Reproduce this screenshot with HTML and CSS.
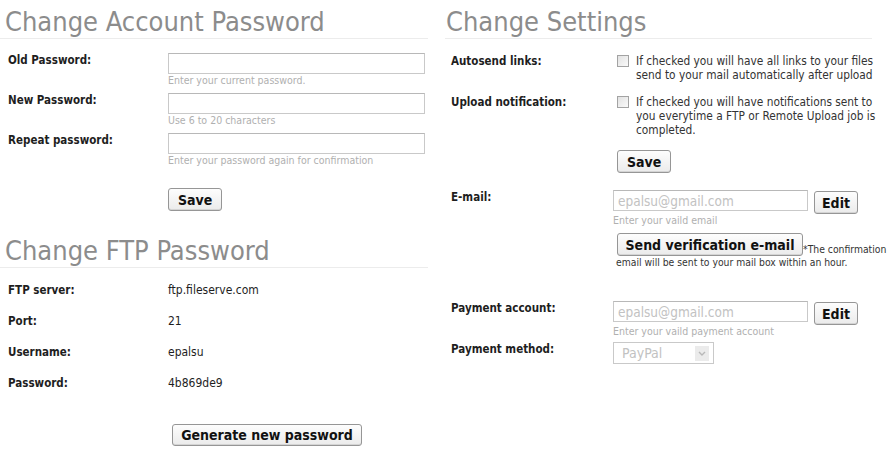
FILE: index.html
```html
<!DOCTYPE html>
<html lang="en">
<head>
    <meta charset="UTF-8">
    <meta name="viewport" content="width=device-width, initial-scale=1.0">
    <title>Account Settings</title>
    <link rel="stylesheet" href="styles.css">
</head>
<body>
    <main class="page">
        <div class="col col-left">
            <section class="panel">
                <h2 class="panel-title">Change Account Password</h2>
                <form class="form account">
                    <div class="row pass-row">
                        <label class="label" for="old-pass">Old Password:</label>
                        <div class="field">
                            <input type="password" id="old-pass" class="text-input">
                            <span class="hint">Enter your current password.</span>
                        </div>
                    </div>
                    <div class="row pass-row">
                        <label class="label" for="new-pass">New Password:</label>
                        <div class="field">
                            <input type="password" id="new-pass" class="text-input">
                            <span class="hint">Use 6 to 20 characters</span>
                        </div>
                    </div>
                    <div class="row pass-row">
                        <label class="label" for="repeat-pass">Repeat password:</label>
                        <div class="field">
                            <input type="password" id="repeat-pass" class="text-input">
                            <span class="hint">Enter your password again for confirmation</span>
                        </div>
                    </div>
                    <div class="actions">
                        <button type="button" class="btn">Save</button>
                    </div>
                </form>
            </section>

            <section class="panel ftp">
                <h2 class="panel-title">Change FTP Password</h2>
                <dl class="ftp-info">
                    <dt>FTP server:</dt>
                    <dd>ftp.fileserve.com</dd>
                    <dt>Port:</dt>
                    <dd>21</dd>
                    <dt>Username:</dt>
                    <dd>epalsu</dd>
                    <dt>Password:</dt>
                    <dd>4b869de9</dd>
                </dl>
                <div class="ftp-actions">
                    <button type="button" class="btn btn-generate">Generate new password</button>
                </div>
            </section>
        </div>

        <div class="col col-right">
            <section class="panel">
                <h2 class="panel-title">Change Settings</h2>
                <form class="form settings">
                    <div class="row check-row">
                        <span class="label">Autosend links:</span>
                        <label class="field check">
                            <input type="checkbox" class="checkbox">
                            <span class="check-text">If checked you will have all links to your files send to your mail automatically after upload</span>
                        </label>
                    </div>
                    <div class="row check-row">
                        <span class="label">Upload notification:</span>
                        <label class="field check">
                            <input type="checkbox" class="checkbox">
                            <span class="check-text">If checked you will have notifications sent to you everytime a FTP or Remote Upload job is completed.</span>
                        </label>
                    </div>
                    <div class="actions">
                        <button type="button" class="btn">Save</button>
                    </div>

                    <div class="row email-row">
                        <label class="label" for="email">E-mail:</label>
                        <div class="field">
                            <div class="inline-edit">
                                <input type="text" id="email" class="text-input short" value="epalsu@gmail.com" disabled>
                                <button type="button" class="btn btn-edit">Edit</button>
                            </div>
                            <span class="hint">Enter your vaild email</span>
                            <p class="verify"><button type="button" class="btn btn-verify">Send verification e-mail</button><span class="note">*The confirmation</span><br><span class="note">email will be sent to your mail box within an hour.</span></p>
                        </div>
                    </div>

                    <div class="row payment-row">
                        <label class="label" for="pay-account">Payment account:</label>
                        <div class="field">
                            <div class="inline-edit">
                                <input type="text" id="pay-account" class="text-input short" value="epalsu@gmail.com" disabled>
                                <button type="button" class="btn btn-edit">Edit</button>
                            </div>
                            <span class="hint">Enter your vaild payment account</span>
                        </div>
                    </div>
                    <div class="row method-row">
                        <span class="label">Payment method:</span>
                        <div class="field">
                            <div class="select disabled">
                                <span class="select-value">PayPal</span>
                                <span class="select-arrow">
                                    <svg width="8" height="5" viewBox="0 0 8 5"><path d="M1 1l3 3 3-3" fill="none" stroke="#b8b8b8" stroke-width="1.4"/></svg>
                                </span>
                            </div>
                        </div>
                    </div>
                </form>
            </section>
        </div>
    </main>
</body>
</html>
```

FILE: styles.css
```css
:root {
  --clr-title: #8c8c8c;
  --clr-text: #1e1e1e;
  --clr-hint: #b0b0b0;
  --clr-line: #ececec;
  --clr-border: #c9c9c9;
  --ff-main: "DejaVu Sans Condensed", "DejaVu Sans", Verdana, sans-serif;
}

*,
::after,
::before {
  margin: 0;
  padding: 0;
  box-sizing: border-box;
}

body {
  background: #fff;
  color: var(--clr-text);
  font-family: var(--ff-main);
  font-stretch: condensed;
  font-size: 11px;
}

.page {
  display: flex;
  gap: 17px;
  width: 891px;
}

.col-left {
  width: 428px;
}

.col-right {
  width: 446px;
}

.panel-title {
  font-weight: normal;
  font-size: 27px;
  line-height: 33px;
  height: 39px;
  padding: 5px 0 0 5px;
  color: var(--clr-title);
  border-bottom: 1px solid var(--clr-line);
}

.col-right .panel-title {
  margin-right: 19px;
  padding-left: 1px;
}

/* label / field rows */
.row {
  display: flex;
  align-items: flex-start;
}

.label {
  flex: 0 0 168px;
  padding-left: 8px;
  font-weight: bold;
  font-size: 11.5px;
}

.field {
  flex: 1;
}

.hint {
  display: block;
  font-size: 10.5px;
  line-height: 13px;
  color: var(--clr-hint);
}

.text-input {
  display: block;
  width: 257px;
  height: 21px;
  border: 1px solid var(--clr-border);
  border-top-color: #b8b8b8;
  background: #fff;
  font-family: var(--ff-main);
  font-size: 13.5px;
  padding: 0 4px;
}

.text-input:disabled {
  color: #c2c2c2;
  background: #fff;
}

.text-input.short {
  width: 195px;
}

.btn {
  height: 23px;
  padding: 0 9px;
  white-space: nowrap;
  font-family: var(--ff-main);
  font-weight: bold;
  font-size: 14px;
  color: #111;
  background: linear-gradient(#fdfdfd, #ebebeb);
  border: 1px solid #969696;
  border-radius: 3px;
  box-shadow: inset 0 -1px 0 #d4d4d4;
}

/* account password */
.account .pass-row:first-child {
  margin-top: 14px;
}

.account .pass-row + .pass-row {
  margin-top: 6px;
}

.account .actions {
  margin: 21px 0 0 168px;
}

/* ftp details */
.ftp {
  margin-top: 18px;
}

.ftp-info {
  display: grid;
  grid-template-columns: 168px 1fr;
  margin-top: 7px;
  line-height: 31px;
}

.ftp-info dt {
  padding-left: 8px;
  font-weight: bold;
  font-size: 11.5px;
}

.ftp-info dd {
  font-size: 12px;
}

.ftp-actions {
  margin: 25px 0 0 172px;
}

.btn-generate {
  width: 190px;
  height: 22px;
  padding: 0;
}

/* settings */
.settings .label {
  padding-left: 6px;
}

.check-row:first-child {
  margin-top: 15px;
}

.check-row + .check-row {
  margin-top: 13px;
}

.check {
  display: flex;
  gap: 7px;
  padding-left: 4px;
  line-height: 14px;
  font-size: 11.8px;
  color: #333;
}

.check-text {
  width: 252px;
}

.checkbox {
  appearance: none;
  flex: 0 0 12px;
  width: 12px;
  height: 12px;
  margin-top: 1px;
  border: 1px solid #a3a3a3;
  background: linear-gradient(135deg, #e2e2e2, #fafafa);
}

.settings .actions {
  margin: 13px 0 0 172px;
}

.email-row {
  margin-top: 17px;
}

.inline-edit {
  display: flex;
  align-items: flex-start;
  gap: 6px;
}

.btn-edit {
  margin-top: 1px;
  width: 44px;
  padding: 0;
}

.verify {
  margin: 6px -20px 0 0;
  padding-left: 3px;
  font-size: 10.3px;
  line-height: 13px;
}

.btn-verify {
  width: 186px;
  padding: 0;
  margin-left: 1px;
  vertical-align: bottom;
}

.note {
  color: #333;
}

.payment-row {
  margin-top: 32px;
}

.method-row {
  margin-top: 4px;
}

.select {
  display: flex;
  align-items: center;
  justify-content: space-between;
  width: 101px;
  height: 22px;
  padding: 0 4px 0 8px;
  border: 1px solid var(--clr-border);
  color: #c2c2c2;
  font-size: 14px;
}

.select-arrow {
  display: grid;
  place-items: center;
  width: 14px;
  height: 15px;
  background: #ebebeb;
}
```
